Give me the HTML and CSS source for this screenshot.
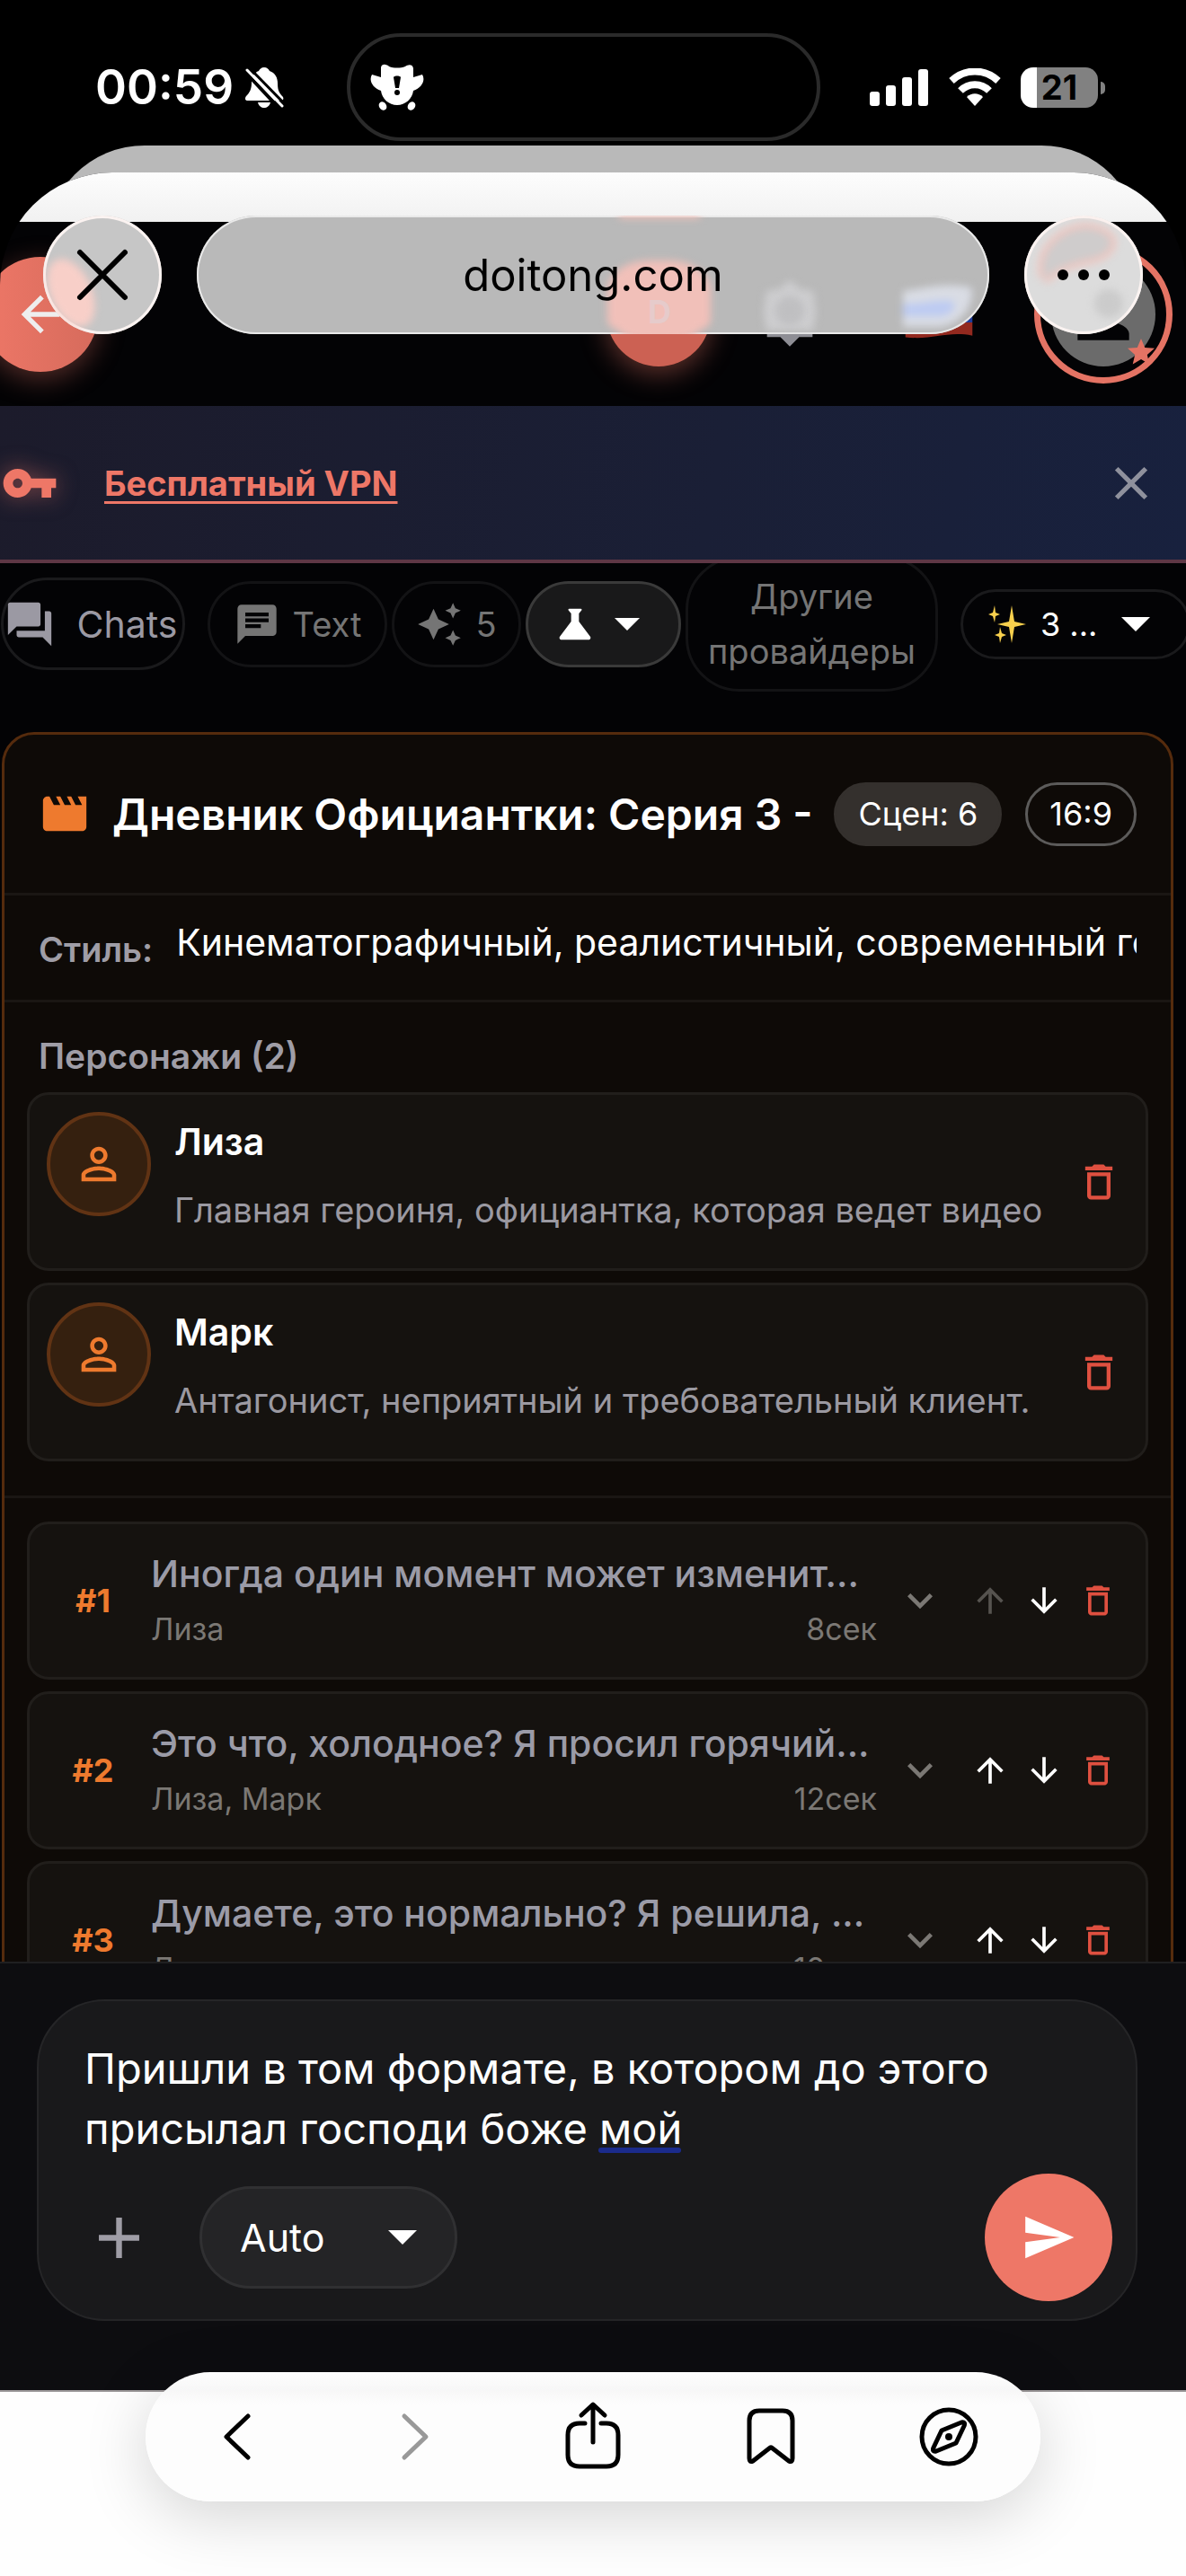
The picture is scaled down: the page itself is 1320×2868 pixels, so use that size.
FILE: index.html
```html
<!DOCTYPE html>
<html lang="ru">
  <head>
    <meta charset="UTF-8" />
    <meta name="viewport" content="width=device-width, initial-scale=1.0" />
    <title>doitong.com</title>
    <link rel="stylesheet" href="styles.css">
  </head>
  <body>
    <!-- Icon set -->
    <svg class="sprite" aria-hidden="true">
      <symbol id="i-back" viewBox="0 0 24 24"><path d="M20 11H7.83l5.59-5.59L12 4l-8 8 8 8 1.41-1.41L7.83 13H20v-2z"/></symbol>
      <symbol id="i-sun" viewBox="0 0 24 24"><path d="M20 8.69V4h-4.69L12 .69 8.69 4H4v4.69L.69 12 4 15.31V20h4.69L12 23.31 15.31 20H20v-4.69L23.31 12 20 8.69zM12 18c-3.31 0-6-2.69-6-6s2.69-6 6-6 6 2.69 6 6-2.69 6-6 6zm0-10c-2.21 0-4 1.79-4 4s1.79 4 4 4 4-1.79 4-4-1.79-4-4-4z"/></symbol>
      <symbol id="i-star" viewBox="0 0 24 24"><path d="M12 17.27L18.18 21l-1.64-7.03L22 9.24l-7.19-.61L12 2 9.19 8.63 2 9.24l5.46 4.73L5.82 21z"/></symbol>
      <symbol id="i-person" viewBox="0 0 24 24"><path d="M12 12c2.21 0 4-1.79 4-4s-1.79-4-4-4-4 1.79-4 4 1.79 4 4 4zm0 2c-2.67 0-8 1.34-8 4v2h16v-2c0-2.66-5.33-4-8-4z"/></symbol>
      <symbol id="i-key" viewBox="0 0 24 24"><path d="M12.65 10C11.83 7.67 9.61 6 7 6c-3.31 0-6 2.69-6 6s2.69 6 6 6c2.61 0 4.83-1.67 5.65-4H17v4h4v-4h2v-4H12.65zM7 14c-1.1 0-2-.9-2-2s.9-2 2-2 2 .9 2 2-.9 2-2 2z"/></symbol>
      <symbol id="i-close" viewBox="0 0 24 24"><path d="M19 6.41L17.59 5 12 10.59 6.41 5 5 6.41 10.59 12 5 17.59 6.41 19 12 13.41 17.59 19 19 17.59 13.41 12z"/></symbol>
      <symbol id="i-forum" viewBox="0 0 24 24"><path d="M21 6h-2v9H6v2c0 .55.45 1 1 1h11l4 4V7c0-.55-.45-1-1-1zm-4 6V3c0-.55-.45-1-1-1H3c-.55 0-1 .45-1 1v14l4-4h10c.55 0 1-.45 1-1z"/></symbol>
      <symbol id="i-chat" viewBox="0 0 24 24"><path d="M20 2H4c-1.1 0-1.99.9-1.99 2L2 22l4-4h14c1.1 0 2-.9 2-2V4c0-1.1-.9-2-2-2zM6 9h12v2H6V9zm8 5H6v-2h8v2zm4-6H6V6h12v2z"/></symbol>
      <symbol id="i-sparkle" viewBox="0 0 24 24"><path d="M19 9l1.25-2.75L23 5l-2.75-1.25L19 1l-1.25 2.75L15 5l2.75 1.25L19 9zm-7.5.5L9 4 6.5 9.5 1 12l5.5 2.5L9 20l2.5-5.5L17 12l-5.5-2.5zM19 15l-1.25 2.75L15 19l2.75 1.25L19 23l1.25-2.75L23 19l-2.75-1.25L19 15z"/></symbol>
      <symbol id="i-flask" viewBox="0 0 24 24"><path d="M19.8 18.4L14 10.67V6.5l1.35-1.69c.26-.33.03-.81-.39-.81H9.04c-.42 0-.65.48-.39.81L10 6.5v4.17L4.2 18.4c-.49.66-.02 1.6.8 1.6h14c.82 0 1.29-.94.8-1.6z"/></symbol>
      <symbol id="i-caret" viewBox="0 0 24 12"><path d="M0 0h24L12 12z"/></symbol>
      <symbol id="i-movie" viewBox="0 0 24 24"><path d="M18 4l2 4h-3l-2-4h-2l2 4h-3l-2-4H8l2 4H7L5 4H4c-1.1 0-1.99.9-1.99 2L2 18c0 1.1.9 2 2 2h16c1.1 0 2-.9 2-2V4h-4z"/></symbol>
      <symbol id="i-user" viewBox="0 0 24 24"><path d="M12 5.9c1.16 0 2.1.94 2.1 2.1s-.94 2.1-2.1 2.1S9.9 9.16 9.9 8s.94-2.1 2.1-2.1m0 9c2.97 0 6.1 1.46 6.1 2.1v1.1H5.9V17c0-.64 3.13-2.1 6.1-2.1M12 4C9.79 4 8 5.79 8 8s1.79 4 4 4 4-1.79 4-4-1.79-4-4-4zm0 9c-2.67 0-8 1.34-8 4v3h16v-3c0-2.66-5.33-4-8-4z"/></symbol>
      <symbol id="i-trash" viewBox="0 0 24 24"><path d="M6 19c0 1.1.9 2 2 2h8c1.1 0 2-.9 2-2V7H6v12zM8 9h8v10H8V9zm7.5-5l-1-1h-5l-1 1H5v2h14V4h-3.5z"/></symbol>
      <symbol id="i-more" viewBox="0 0 24 24"><path d="M16.59 8.59L12 13.17 7.41 8.59 6 10l6 6 6-6z"/></symbol>
      <symbol id="i-up" viewBox="0 0 24 24"><path d="M4 12l1.41 1.41L11 7.83V20h2V7.83l5.58 5.59L20 12l-8-8-8 8z"/></symbol>
      <symbol id="i-down" viewBox="0 0 24 24"><path d="M20 12l-1.41-1.41L13 16.17V4h-2v12.17l-5.58-5.59L4 12l8 8 8-8z"/></symbol>
      <symbol id="i-add" viewBox="0 0 24 24"><path d="M19 13h-6v6h-2v-6H5v-2h6V5h2v6h6v2z"/></symbol>
      <symbol id="i-send" viewBox="0 0 24 24"><path d="M2.01 21L23 12 2.01 3 2 10l15 2-15 2z"/></symbol>
    </svg>

    <!-- Phone status bar -->
    <div class="status-bar">
      <div class="status-left">
        <span class="time">00:59</span>
        <svg class="bell" viewBox="0 0 44 46">
          <path d="M22 1c3 0 5 2 6 4 6 2 9 7 9 14 0 8 2 11 6 15 1 2 0 4-2 4H4c-3 0-4-2-2-5 4-4 6-8 6-15C8 11 11 7 16 5c1-2 3-4 6-4zM15 40h14c-1 4-4 6-7 6s-6-2-7-6z" fill="#fff"/>
          <path d="M0 5l40 43" stroke="#000" stroke-width="4"/>
          <path d="M3 4l39 40" stroke="#fff" stroke-width="3" stroke-linecap="round"/>
          <path d="M6 2l38 39" stroke="#000" stroke-width="3"/>
        </svg>
      </div>
      <div class="island">
        <svg class="island-icon" viewBox="0 0 60 52">
          <path d="M12 4C13-1 19 1 21 3c5 2 13 2 18 0 3-2 8-3 9 2v10l10-3c4 7-1 15-10 18-1 9-9 16-18 16s-17-7-18-16C3 27-2 19 2 12l10 3z" fill="#fff"/>
          <ellipse cx="14" cy="47" rx="4" ry="5" transform="rotate(-35 14 47)" fill="#fff"/>
          <ellipse cx="46" cy="47" rx="4" ry="5" transform="rotate(35 46 47)" fill="#fff"/>
          <path d="M26 15c1-2 7-2 8 0l-2 12h-4z" fill="#000"/>
          <circle cx="30" cy="32" r="3" fill="#000"/>
        </svg>
      </div>
      <div class="status-right">
        <svg class="signal" viewBox="0 0 66 42">
          <rect y="26" width="11" height="16" rx="3"/>
          <rect x="18" y="19" width="11" height="23" rx="3"/>
          <rect x="36" y="10" width="11" height="32" rx="3"/>
          <rect x="54" y="1" width="11" height="41" rx="3"/>
        </svg>
        <svg class="wifi" viewBox="0 0 58 42">
          <path d="M3 14c15-14 37-14 52 0"/>
          <path d="M13 25c9-9 23-9 32 0"/>
          <path d="M29 42l-9-10c5-5 13-5 18 0z" fill="#fff" stroke="none"/>
        </svg>
        <div class="battery"><span>21</span></div>
      </div>
    </div>

    <div class="sheet-back"></div>

    <main class="sheet">
      <div class="sheet-top"></div>

      <!-- Browser address bar floating over the site -->
      <div class="browser-bar">
        <button class="glass round" aria-label="Закрыть">
          <svg viewBox="0 0 132 132">
            <g class="soft"><ellipse cx="31" cy="86" rx="23" ry="40" transform="rotate(-24 31 86)" fill="#f8cfc8"/></g>
            <path d="M91 41L41 91M41 41l50 50" stroke="#000" stroke-width="6" stroke-linecap="round"/>
          </svg>
        </button>
        <a class="glass address" href="#">
          <svg viewBox="0 0 882 132" aria-hidden="true">
            <g class="soft">
              <rect x="457" y="50" width="115" height="90" rx="46" ry="34" fill="#f1c0b9"/>
              <rect x="457" y="90" width="115" height="36" rx="10" fill="#f1c0b9"/>
              <rect x="470" y="-3" width="90" height="6" fill="#f4c2ba"/>
              <path d="M634 84l14-2 12-10 12 10 14 2 3 24-3 20h-52l-3-20z" fill="#cdcdcf"/>
              <path d="M786 84c25-2 40-10 76-4 4 22-14 44-40 44h-36z" fill="#d9dce4"/>
              <path d="M786 98c20 2 40-6 56-2 4 8-4 14-12 16h-44z" fill="#bdcbf2"/>
            </g>
            <circle class="soft" cx="660" cy="106" r="16" fill="#bfbfc1"/>
            <text class="coin" x="502" y="120">D</text>
          </svg>
          <span>doitong.com</span>
        </a>
        <button class="glass round light" aria-label="Меню">
          <svg viewBox="0 0 132 132">
            <g class="soft">
              <path d="M20 70C8 40 45 6 76 12c36 8 26 32 2 38-28 6-40 10-54 24" fill="#cfcccc" stroke="#f3c4bd" stroke-width="5"/>
              <circle cx="94" cy="98" r="16" fill="#cbcbcb"/>
            </g>
            <circle cx="43" cy="66" r="6"/><circle cx="66" cy="66" r="6"/><circle cx="89" cy="66" r="6"/>
          </svg>
        </button>
      </div>

      <header class="site-header">
        <button class="back-btn" aria-label="Назад"><svg><use href="#i-back"/></svg></button>
        <div class="header-pair">
          <button class="coin-btn" aria-label="Баланс"></button>
          <button class="theme-btn" aria-label="Тема"><svg><use href="#i-sun"/></svg></button>
        </div>
        <button class="flag-btn" aria-label="Язык">
          <svg viewBox="0 0 82 66">
            <path d="M0 8c30-8 50 6 82-2v18H0z" fill="#eee"/>
            <path d="M0 24h82v19H0z" fill="#1f3c9c"/>
            <path d="M0 43h82v16c-32-6-48 6-82 2z" fill="#93291f"/>
          </svg>
        </button>
        <button class="profile-btn" aria-label="Профиль">
          <span><svg><use href="#i-person"/></svg></span>
          <svg class="badge"><use href="#i-star"/></svg>
        </button>
      </header>

      <div class="vpn-banner">
        <svg class="vpn-key"><use href="#i-key"/></svg>
        <a href="#">Бесплатный VPN</a>
        <button aria-label="Скрыть"><svg><use href="#i-close"/></svg></button>
      </div>

      <section class="workspace">
        <nav class="modes">
          <button class="chip chats"><svg><use href="#i-forum"/></svg>Chats</button>
          <div class="mode-group">
            <button class="chip text"><svg><use href="#i-chat"/></svg>Text</button>
            <button class="chip count"><svg><use href="#i-sparkle"/></svg>5</button>
            <button class="chip lab" aria-label="Лаборатория">
              <svg><use href="#i-flask"/></svg>
              <svg class="caret"><use href="#i-caret"/></svg>
            </button>
            <button class="chip providers">Другие провайдеры</button>
          </div>
          <label class="chip model">
            <svg class="spark" viewBox="0 0 42 42">
              <path d="M26 0l3 18 13 3-13 3-3 18-3-18-13-3 13-3z"/>
              <path d="M7 0l1 8 5 2-5 2-1 7-2-7-5-2 5-2zM13 24l2 7 5 2-5 2-2 7-1-7-5-2 5-2z"/>
            </svg>
            <select aria-label="Модель"><option>3 ...</option></select>
            <svg class="caret"><use href="#i-caret"/></svg>
          </label>
        </nav>

        <article class="story">
          <header class="story-head">
            <svg><use href="#i-movie"/></svg>
            <h1>Дневник Официантки: Серия 3 -</h1>
            <span class="tag filled">Сцен: 6</span>
            <span class="tag">16:9</span>
          </header>

          <div class="style-row">
            <label for="style">Стиль:</label>
            <input type="text" id="style" value="Кинематографичный, реалистичный, современный город" />
          </div>

          <section class="characters">
            <h2>Персонажи (2)</h2>
            <div class="character">
              <div class="avatar"><svg><use href="#i-user"/></svg></div>
              <div class="character-info">
                <h3>Лиза</h3>
                <input type="text" aria-label="Описание: Лиза" value="Главная героиня, официантка, которая ведет видео" />
              </div>
              <button class="delete" aria-label="Удалить"><svg><use href="#i-trash"/></svg></button>
            </div>
            <div class="character">
              <div class="avatar"><svg><use href="#i-user"/></svg></div>
              <div class="character-info">
                <h3>Марк</h3>
                <input type="text" aria-label="Описание: Марк" value="Антагонист, неприятный и требовательный клиент." />
              </div>
              <button class="delete" aria-label="Удалить"><svg><use href="#i-trash"/></svg></button>
            </div>
          </section>

          <section class="scenes">
            <div class="scene">
              <b>#1</b>
              <div class="scene-info">
                <h3>Иногда один момент может изменит...</h3>
                <p><span>Лиза</span><span>8сек</span></p>
              </div>
              <div class="scene-actions">
                <button class="expand" aria-label="Раскрыть"><svg><use href="#i-more"/></svg></button>
                <button disabled aria-label="Вверх"><svg><use href="#i-up"/></svg></button>
                <button aria-label="Вниз"><svg><use href="#i-down"/></svg></button>
                <button class="delete" aria-label="Удалить"><svg><use href="#i-trash"/></svg></button>
              </div>
            </div>
            <div class="scene">
              <b>#2</b>
              <div class="scene-info">
                <h3>Это что, холодное? Я просил горячий...</h3>
                <p><span>Лиза, Марк</span><span>12сек</span></p>
              </div>
              <div class="scene-actions">
                <button class="expand" aria-label="Раскрыть"><svg><use href="#i-more"/></svg></button>
                <button aria-label="Вверх"><svg><use href="#i-up"/></svg></button>
                <button aria-label="Вниз"><svg><use href="#i-down"/></svg></button>
                <button class="delete" aria-label="Удалить"><svg><use href="#i-trash"/></svg></button>
              </div>
            </div>
            <div class="scene">
              <b>#3</b>
              <div class="scene-info">
                <h3>Думаете, это нормально? Я решила, ...</h3>
                <p><span>Лиза</span><span>10сек</span></p>
              </div>
              <div class="scene-actions">
                <button class="expand" aria-label="Раскрыть"><svg><use href="#i-more"/></svg></button>
                <button aria-label="Вверх"><svg><use href="#i-up"/></svg></button>
                <button aria-label="Вниз"><svg><use href="#i-down"/></svg></button>
                <button class="delete" aria-label="Удалить"><svg><use href="#i-trash"/></svg></button>
              </div>
            </div>
          </section>
        </article>
      </section>

      <form class="composer">
        <div class="composer-box">
          <div class="message">
            <textarea rows="2" aria-label="Сообщение" spellcheck="false">Пришли в том формате, в котором до этого
присылал господи боже мой</textarea>
            <span class="spell-mark"></span>
          </div>
          <div class="composer-tools">
            <button type="button" class="add" aria-label="Добавить"><svg><use href="#i-add"/></svg></button>
            <label class="auto">
              <select aria-label="Режим"><option>Auto</option></select>
              <svg class="caret"><use href="#i-caret"/></svg>
            </label>
            <button type="submit" class="send" aria-label="Отправить"><svg><use href="#i-send"/></svg></button>
          </div>
        </div>
      </form>
    </main>

    <!-- Browser toolbar -->
    <footer class="browser-footer">
      <nav class="browser-nav">
        <button aria-label="Назад"><svg viewBox="0 0 80 80"><path d="M52 17L28 40l24 23"/></svg></button>
        <button disabled aria-label="Вперёд"><svg viewBox="0 0 80 80"><path d="M28 17l24 23-24 23"/></svg></button>
        <button aria-label="Поделиться"><svg viewBox="0 0 80 80"><path d="M31 25h-6q-13 0-13 13v22q0 13 13 13h30q13 0 13-13V38q0-13-13-13h-6M40 46V6M27 16L40 4l13 12"/></svg></button>
        <button aria-label="Закладки"><svg viewBox="0 0 80 80"><path d="M16 22q0-11 11-11h26q11 0 11 11v42q0 5-4 3L42 53q-2-2-4 0L20 67q-4 2-4-3z"/></svg></button>
        <button aria-label="Вкладки"><svg viewBox="0 0 80 80"><circle cx="40" cy="40" r="30"/><path d="M32 33l22-9q5-1 3 4l-9 19-22 9q-5 1-3-4z"/><circle cx="40" cy="40" r="4" fill="#000" stroke="none"/></svg></button>
      </nav>
    </footer>
  </body>
</html>
```

FILE: styles.css
```css
* {
  margin: 0;
  padding: 0;
  box-sizing: border-box;
}

body {
  height: 100vh;
  display: flex;
  flex-direction: column;
  overflow: hidden;
  background: #000;
  color: #fff;
  font-family: Inter, "Noto Sans", sans-serif;
}

button,
input,
select,
textarea {
  font: inherit;
  color: inherit;
  background: none;
  border: none;
  outline: none;
}

button {
  display: flex;
  align-items: center;
  justify-content: center;
  flex: none;
  cursor: pointer;
}

select {
  appearance: none;
}

svg {
  display: block;
  flex: none;
  fill: currentColor;
}

.sprite {
  position: absolute;
  width: 0;
  height: 0;
}

/* Status bar */
.status-bar {
  display: grid;
  grid-template-columns: 386fr 527px 407fr;
  align-items: center;
  flex: none;
  height: 162px;
  padding-top: 32px;
}

.status-left {
  display: flex;
  align-items: center;
  gap: 12px;
  padding-left: 106px;
}

.time {
  font-size: 53px;
  font-weight: 600;
}

.bell {
  width: 44px;
  height: 46px;
}

.island {
  display: flex;
  align-items: center;
  height: 120px;
  padding-left: 22px;
  border: 4px solid #2a2a2a;
  border-radius: 60px;
}

.island-icon {
  width: 60px;
  height: 52px;
}

.status-right {
  display: flex;
  align-items: center;
  gap: 22px;
  padding-left: 55px;
}

.signal {
  width: 66px;
  height: 42px;
}

.wifi {
  width: 58px;
  height: 42px;
  fill: none;
  stroke: #fff;
  stroke-width: 8px;
}

.battery {
  position: relative;
  width: 86px;
  height: 45px;
  border-radius: 14px;
  background: linear-gradient(90deg, #fff 18px, #818181 18px);
  color: #000;
  font-size: 38px;
  font-weight: 700;
  line-height: 45px;
  text-align: center;
}

.battery::after {
  content: "";
  position: absolute;
  right: -8px;
  top: 16px;
  width: 5px;
  height: 14px;
  border-radius: 0 5px 5px 0;
  background: #818181;
}

/* Sheets */
.sheet-back {
  flex: none;
  height: 110px;
  margin: 0 51px -80px;
  border-radius: 110px 110px 0 0;
  background: #b9b9b9;
}

.sheet {
  position: relative;
  flex: 1;
  min-height: 0;
  display: flex;
  flex-direction: column;
  overflow: hidden;
  border-radius: 125px 125px 0 0;
  background: #030305;
}

.sheet-top {
  flex: none;
  height: 55px;
  background: linear-gradient(#fdfdfd, #f1f1f1);
}

/* Address bar */
.browser-bar {
  position: absolute;
  z-index: 2;
  top: 48px;
  left: 48px;
  right: 48px;
  display: flex;
  gap: 39px;
}

.glass {
  position: relative;
  height: 132px;
  border-radius: 66px;
  background: #b9b9b9;
  box-shadow: inset 0 0 0 2px #e9e9e9;
  overflow: hidden;
  color: #000;
  text-decoration: none;
}

.glass svg {
  position: absolute;
  inset: 0;
  width: 100%;
  height: 100%;
}

.round {
  width: 132px;
  background: #c6c6c6;
  box-shadow: inset 0 0 0 3px #fbf3f1;
}

.light {
  background: #dcdcdc;
}

.soft {
  filter: blur(4px);
}

.address {
  flex: 1;
  display: flex;
  align-items: center;
  justify-content: center;
  font-size: 49px;
}

.address span {
  position: relative;
}

.coin {
  fill: #e6cbcb;
  font-size: 36px;
  font-weight: 700;
}

/* Site header */
.site-header {
  display: flex;
  align-items: center;
  flex: none;
  gap: 48px;
  height: 205px;
  padding-right: 15px;
}

.back-btn {
  width: 128px;
  height: 128px;
  margin: 0 auto 0 -19px;
  border-radius: 50%;
  background: linear-gradient(90deg, #ee7767, #d66b5c);
  box-shadow: 0 8px 30px rgba(238, 119, 103, 0.35);
  color: #eee;
}

.back-btn svg {
  width: 64px;
  height: 64px;
}

.header-pair {
  display: flex;
  align-items: center;
  gap: 28px;
}

.coin-btn {
  width: 116px;
  height: 116px;
  border-radius: 50%;
  background: #cc6153;
  box-shadow: 0 8px 30px rgba(238, 119, 103, 0.4);
}

.theme-btn {
  width: 120px;
  color: #8e8e95;
}

.theme-btn svg {
  width: 76px;
  height: 76px;
}

.flag-btn {
  width: 116px;
}

.flag-btn svg {
  width: 82px;
  height: 60px;
}

.profile-btn {
  position: relative;
  width: 154px;
  height: 154px;
  border: 7px solid #e47364;
  border-radius: 50%;
}

.profile-btn span {
  display: flex;
  align-items: center;
  justify-content: center;
  width: 116px;
  height: 116px;
  border-radius: 50%;
  background: #6b6b6b;
  color: #030305;
}

.profile-btn span svg {
  width: 86px;
  height: 86px;
}

.badge {
  position: absolute;
  right: 10px;
  bottom: 10px;
  width: 36px;
  height: 36px;
  color: #e47364;
}

/* VPN banner */
.vpn-banner {
  display: flex;
  align-items: center;
  flex: none;
  height: 175px;
  padding: 0 30px 0 1px;
  background: linear-gradient(100deg, #1c1b2b, #1a1f36 60%, #18213e);
  border-bottom: 4px solid #5e3745;
  color: #ee7767;
}

.vpn-key {
  width: 64px;
  height: 64px;
  filter: drop-shadow(0 0 12px rgba(238, 119, 103, 0.5));
}

.vpn-banner a {
  margin: 0 auto 0 51px;
  color: inherit;
  font-size: 38px;
  font-weight: 700;
  text-decoration-thickness: 3px;
  text-underline-offset: 6px;
}

.vpn-banner button {
  color: #8f919d;
}

.vpn-banner button svg {
  width: 62px;
  height: 62px;
}

/* Workspace */
.workspace {
  flex: 1;
  min-height: 0;
  overflow: hidden;
}

.modes {
  display: flex;
  align-items: center;
  gap: 25px;
  margin: -8px 0 45px 1px;
}

.mode-group {
  display: flex;
  align-items: center;
  gap: 5px;
}

.chip {
  display: flex;
  align-items: center;
  flex: none;
  height: 96px;
  border: 3px solid #131315;
  border-radius: 52px;
  color: #757575;
  font-size: 38px;
}

.chip svg {
  width: 52px;
  height: 52px;
}

.chip.chats {
  gap: 24px;
  width: 205px;
  height: 103px;
  padding-right: 6px;
  border-color: #1a1a1c;
  color: #9b99a3;
  font-size: 41px;
}

.chip.chats svg {
  width: 58px;
  height: 58px;
}

.chip.text {
  gap: 14px;
  width: 200px;
}

.chip.count {
  gap: 14px;
  width: 144px;
}

.chip.lab {
  gap: 18px;
  width: 173px;
  padding-right: 18px;
  border-color: #3a3a3a;
  background: #19191a;
  color: #fff;
}

.chip .caret {
  width: 28px;
  height: 14px;
}

.chip.providers {
  width: 281px;
  height: 151px;
  border-radius: 60px;
  line-height: 61px;
}

.chip.model {
  gap: 16px;
  width: 256px;
  height: 78px;
  padding-left: 28px;
  border-color: #1a1a1c;
  color: #fff;
  font-size: 36px;
}

.chip.model svg {
  width: 42px;
  height: 42px;
}

.chip.model .spark {
  fill: #f8d04d;
}

.chip.model select {
  width: 74px;
}

.chip.model .caret {
  width: 32px;
  height: 16px;
}

/* Story card */
.story {
  margin: 0 14px 0 2px;
  border: 3px solid #552b0d;
  border-radius: 36px;
  background: #0e0a07;
}

.story-head {
  display: flex;
  align-items: center;
  height: 179px;
  padding: 0 38px;
  border-bottom: 3px solid #1a1613;
}

.story-head svg {
  width: 58px;
  height: 58px;
  color: #ee7a2e;
}

.story-head h1 {
  flex: 1;
  min-width: 0;
  margin-left: 24px;
  font-size: 48px;
  font-weight: 600;
  white-space: nowrap;
}

.tag {
  height: 71px;
  padding: 0 24px;
  border: 3px solid #5c5b5a;
  border-radius: 36px;
  font-size: 36px;
  line-height: 65px;
}

.tag.filled {
  margin-right: 26px;
  border-color: #34302d;
  background: #34302d;
}

.style-row {
  display: flex;
  align-items: center;
  height: 119px;
  padding: 0 38px;
  border-bottom: 3px solid #1a1613;
}

.style-row label {
  padding-top: 4px;
  color: #9f9da6;
  font-size: 38px;
  font-weight: 600;
}

.style-row input {
  flex: 1;
  min-width: 0;
  margin-left: 26px;
  padding-bottom: 12px;
  font-size: 41px;
}

.characters {
  display: flex;
  flex-direction: column;
  gap: 13px;
  padding: 33px 25px 38px;
  border-bottom: 3px solid #1a1613;
}

.characters h2 {
  padding-left: 13px;
  color: #9f9da6;
  font-size: 39px;
  font-weight: 600;
  line-height: 54px;
}

.character {
  display: flex;
  align-items: center;
  height: 199px;
  padding: 0 26px 0 19px;
  border: 3px solid #211e1b;
  border-radius: 24px;
  background: #15120f;
}

.avatar {
  display: flex;
  align-items: center;
  justify-content: center;
  align-self: flex-start;
  flex: none;
  width: 116px;
  height: 116px;
  margin-top: 19px;
  border: 4px solid #613314;
  border-radius: 50%;
  background: #35200f;
  color: #ee7a2e;
}

.avatar svg {
  width: 58px;
  height: 58px;
}

.character-info {
  flex: 1;
  min-width: 0;
  align-self: flex-start;
  margin: 22px 33px 0 26px;
}

.character-info h3 {
  font-size: 41px;
  font-weight: 600;
  line-height: 60px;
}

.character-info input {
  display: block;
  width: 100%;
  height: 52px;
  margin-top: 20px;
  color: #9b99a1;
  font-size: 38px;
}

.delete {
  color: #df5040;
}

.character .delete svg {
  width: 52px;
  height: 52px;
}

/* Scenes */
.scenes {
  display: flex;
  flex-direction: column;
  gap: 13px;
  padding: 26px 25px;
}

.scene {
  display: flex;
  align-items: center;
  height: 176px;
  padding: 0 31px 0 33px;
  border: 3px solid #211e1b;
  border-radius: 24px;
  background: #15120f;
}

.scene b {
  width: 75px;
  text-align: center;
  color: #ee7a2e;
  font-size: 36px;
}

.scene-info {
  flex: 1;
  min-width: 0;
  margin-left: 27px;
}

.scene-info h3 {
  color: #9b9ba7;
  font-size: 41px;
  font-weight: 500;
  line-height: 64px;
  white-space: nowrap;
}

.scene-info p {
  display: flex;
  justify-content: space-between;
  color: #7b7874;
  font-size: 34px;
  line-height: 60px;
}

.scene-actions {
  display: flex;
  align-items: center;
  gap: 16px;
  margin-left: 20px;
}

.scene-actions svg {
  width: 44px;
  height: 44px;
}

.scene-actions .expand {
  margin-right: 12px;
  color: #7b7874;
}

.scene-actions .expand svg {
  width: 56px;
  height: 56px;
}

.scene-actions button:disabled {
  color: #56534f;
}

/* Composer */
.composer {
  flex: none;
  padding: 40px 54px 77px 41px;
  border-top: 2px solid #1f1f21;
  background: #0d0d10;
}

.composer-box {
  padding: 41px 26px 20px 51px;
  border: 2px solid #252527;
  border-radius: 76px;
  background: #19191b;
}

.message {
  position: relative;
}

.message textarea {
  display: block;
  width: 100%;
  height: 136px;
  overflow: hidden;
  resize: none;
  font-size: 47px;
  line-height: 67px;
  white-space: pre;
}

.spell-mark {
  position: absolute;
  left: 572px;
  top: 122px;
  width: 92px;
  height: 6px;
  border-radius: 3px;
  background: #1b2b8c;
}

.composer-tools {
  display: flex;
  align-items: center;
  margin-top: 15px;
}

.add {
  color: #9f9da6;
}

.add svg {
  width: 77px;
  height: 77px;
}

.auto {
  display: flex;
  align-items: center;
  justify-content: space-between;
  width: 287px;
  height: 114px;
  margin: 0 auto 0 51px;
  padding: 0 42px;
  border: 3px solid #303032;
  border-radius: 57px;
  background: #242426;
  font-size: 43px;
}

.auto .caret {
  width: 32px;
  height: 16px;
}

.send {
  width: 142px;
  height: 142px;
  border-radius: 50%;
  background: #ee7767;
}

.send svg {
  width: 62px;
  height: 62px;
}

/* Browser toolbar */
.browser-footer {
  position: relative;
  flex: none;
  height: 207px;
  padding: 0 162px;
  background: #fefefe;
  border-top: 2px solid #9b9798;
}

.browser-nav {
  display: grid;
  grid-template-columns: repeat(5, 1fr);
  height: 144px;
  margin-top: -22px;
  border-radius: 72px;
  background: linear-gradient(#fefefe, #f7f7f7 20px, #fdfdfd 36px);
  box-shadow: 0 16px 70px rgba(0, 0, 0, 0.17);
  padding: 0 3px;
}

.browser-nav svg {
  width: 80px;
  height: 80px;
  fill: none;
  stroke: #000;
  stroke-width: 5;
  stroke-linecap: round;
  stroke-linejoin: round;
}

.browser-nav button:disabled svg {
  stroke: #999;
}
```
